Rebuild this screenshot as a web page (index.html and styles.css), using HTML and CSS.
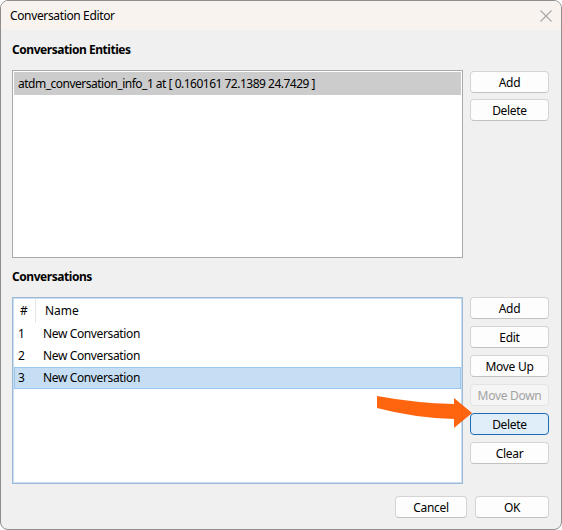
FILE: index.html
```html
<!DOCTYPE html>
<html lang="en">
<head>
    <meta charset="UTF-8">
    <title>Conversation Editor</title>
    <link rel="stylesheet" href="styles.css">
</head>
<body>
<div class="window">
    <div class="titlebar">
        <span class="title">Conversation Editor</span>
        <svg class="close" width="12" height="12" viewBox="0 0 12 12">
            <path d="M0.5 0.5 L11.5 11.5 M11.5 0.5 L0.5 11.5" stroke="#a6a6a6" stroke-width="1.1" fill="none"/>
        </svg>
    </div>
    <div class="content">
        <div class="groupTitle">Conversation Entities</div>
        <div class="group">
            <div class="list entities">
                <div class="item selected gray">atdm_conversation_info_1 at [ 0.160161 72.1389 24.7429 ]</div>
            </div>
            <div class="buttons tight">
                <button class="btn">Add</button>
                <button class="btn">Delete</button>
            </div>
        </div>

        <div class="groupTitle second">Conversations</div>
        <div class="group">
            <div class="list conversations">
                <div class="header">
                    <span class="hcell num">#</span>
                    <span class="hcell">Name</span>
                </div>
                <div class="row"><span class="num">1</span><span>New Conversation</span></div>
                <div class="row"><span class="num">2</span><span>New Conversation</span></div>
                <div class="row selected blue"><span class="num">3</span><span>New Conversation</span></div>
            </div>
            <div class="buttons">
                <button class="btn">Add</button>
                <button class="btn">Edit</button>
                <button class="btn">Move Up</button>
                <button class="btn disabled">Move Down</button>
                <button class="btn focused">Delete</button>
                <button class="btn">Clear</button>
            </div>
        </div>

        <div class="footer">
            <button class="btn cancel">Cancel</button>
            <button class="btn ok">OK</button>
        </div>
    </div>

    <!--orange arrow pointing at the Delete button-->
    <svg class="arrow" width="110" height="45" viewBox="0 0 110 45">
        <path d="M7 6 Q45 13 84 14 L84 8 L102 23 L84 38 L84 29 Q45 28 7 18 Z" fill="#ff5a00" fill-opacity="0.94"/>
    </svg>
</div>
</body>
</html>
```

FILE: styles.css
```css
html, body, div, span, button {
    margin: 0;
    padding: 0;
}

body {
    width: 562px;
    height: 530px;
    background: #ffffff;
    font-family: "Noto Sans", "Open Sans", sans-serif;
    font-size: 12px;
    color: #000000;
}

.window {
    position: relative;
    width: 562px;
    height: 530px;
    box-sizing: border-box;
    border: 1px solid #8e8e8e;
    border-radius: 8px;
    overflow: hidden;
    background: #f0f0f0;
    display: flex;
    flex-direction: column;
}

.titlebar {
    height: 29px;
    background: #f8f3ef;
    display: flex;
    align-items: center;
    justify-content: space-between;
    padding: 0 9px 0 9px;
    flex-shrink: 0;
}

.title {
    font-size: 12px;
    letter-spacing: -0.36px;
}

.content {
    padding: 0 12px 0 11px;
    flex: 1;
}

.groupTitle {
    height: 20px;
    line-height: 20px;
    font-weight: bold;
    letter-spacing: -0.45px;
    margin-top: 10px;
    margin-bottom: 10px;
}

.groupTitle.second {
    margin-top: 9px;
}

.group {
    display: grid;
    grid-template-columns: 451px 79px;
    column-gap: 7px;
}

.list {
    background: #ffffff;
    box-sizing: border-box;
    border: 1px solid #a9a9a9;
}

.entities {
    height: 188px;
    padding-top: 1px;
}

.conversations {
    height: 187px;
    border-color: #9db9d4;
    box-shadow: inset 0 0 0 1px #c6dcf0;
}

.item {
    height: 23px;
    line-height: 23px;
    padding-left: 4px;
    margin: 0 0 0 1px;
    width: 447px;
    box-sizing: border-box;
    letter-spacing: -0.5px;
}

.selected.gray {
    background: #cccccc;
}

.header {
    height: 25px;
    display: flex;
    align-items: stretch;
}

.hcell {
    line-height: 25px;
    padding-left: 9px;
}

.hcell.num {
    width: 23px;
    box-sizing: border-box;
    border-right: 1px solid #e6e6e6;
    padding-left: 7px;
}

.row {
    height: 22px;
    line-height: 22px;
    display: flex;
    margin-left: 1px;
    width: 447px;
    box-sizing: border-box;
    letter-spacing: -0.37px;
}

.row .num {
    width: 29px;
    padding-left: 4px;
    box-sizing: border-box;
}

.selected.blue {
    background: #c6def3;
    border: 1px solid #9ac6ec;
    line-height: 20px;
}

.selected.blue .num {
    padding-left: 3px;
    width: 28px;
}

.buttons {
    display: flex;
    flex-direction: column;
    gap: 7px;
}

.buttons.tight {
    gap: 6px;
    padding-top: 1px;
}

.btn {
    height: 22px;
    box-sizing: border-box;
    border: 1px solid #d4d4d4;
    border-bottom-color: #c2c2c2;
    border-radius: 4px;
    background: #fdfdfd;
    font-family: "Noto Sans", "Open Sans", sans-serif;
    font-size: 12px;
    letter-spacing: -0.3px;
    color: #000000;
    line-height: 19px;
}

.btn.disabled {
    background: #f5f5f5;
    border-color: #e3e3e3;
    color: #a2a2a2;
}

.btn.focused {
    background: #e0eef9;
    border-color: #1c6cb5;
}

.footer {
    display: flex;
    justify-content: flex-end;
    gap: 8px;
    margin-top: 12px;
}

.cancel {
    width: 72px;
}

.ok {
    width: 74px;
}

.arrow {
    position: absolute;
    left: 369px;
    top: 389px;
}
```
